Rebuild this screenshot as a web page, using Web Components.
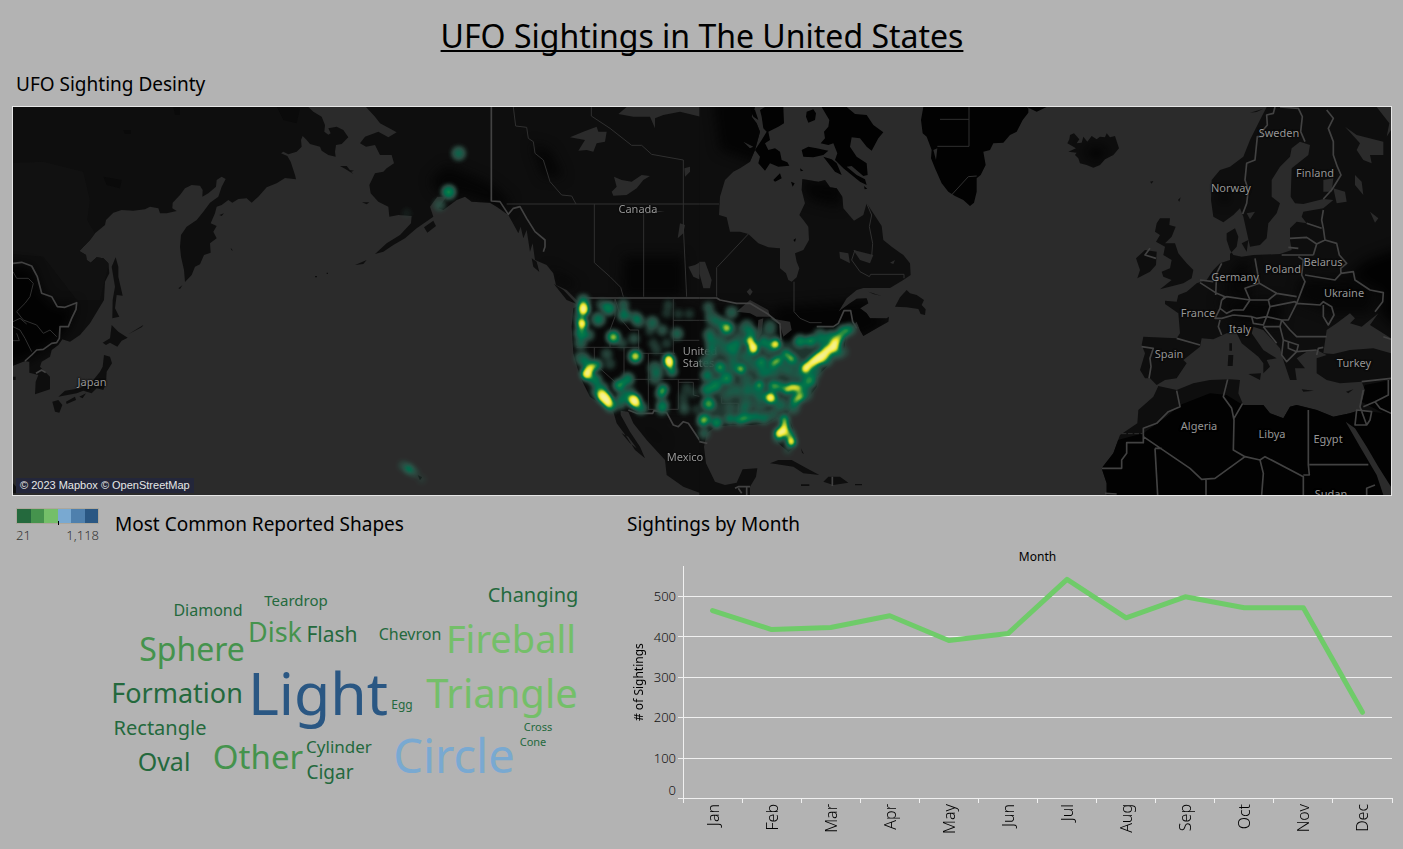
<!DOCTYPE html>
<html lang="en">
<head>
<meta charset="utf-8">
<title>UFO Sightings in The United States</title>
<style>
  html { background: #b3b3b3; }
  body { margin: 0; font-family: "Noto Sans", "Open Sans", sans-serif; color: #000; }
</style>
</head>
<body>
<ufo-dashboard>
  <span slot="title">UFO Sightings in The United States</span>
  <dash-panel slot="map" heading="UFO Sighting Desinty">
    <density-map>
      <map-label x="79" y="275">Japan</map-label>
      <map-label x="625" y="102">Canada</map-label>
      <map-label x="687" y="250">United<br>States</map-label>
      <map-label x="672" y="350">Mexico</map-label>
      <map-label x="1266" y="26">Sweden</map-label>
      <map-label x="1302" y="66">Finland</map-label>
      <map-label x="1218" y="81">Norway</map-label>
      <map-label x="1310" y="155">Belarus</map-label>
      <map-label x="1270" y="162">Poland</map-label>
      <map-label x="1222" y="170">Germany</map-label>
      <map-label x="1331" y="186">Ukraine</map-label>
      <map-label x="1185" y="206">France</map-label>
      <map-label x="1227" y="222">Italy</map-label>
      <map-label x="1156" y="247">Spain</map-label>
      <map-label x="1341" y="256">Turkey</map-label>
      <map-label x="1186" y="319">Algeria</map-label>
      <map-label x="1259" y="327">Libya</map-label>
      <map-label x="1315" y="332">Egypt</map-label>
      <map-label x="1318" y="387">Sudan</map-label>
    </density-map>
  </dash-panel>
  <color-legend slot="legend" low="21" high="1,118"></color-legend>
  <dash-panel slot="shapes" heading="Most Common Reported Shapes">
    <word-cloud>
      <cloud-word x="100" y="71" size="16" tone="deep">Diamond</cloud-word>
      <cloud-word x="188" y="61" size="15" tone="deep">Teardrop</cloud-word>
      <cloud-word x="425" y="58" size="20" tone="deep">Changing</cloud-word>
      <cloud-word x="84" y="116" size="32" tone="mid">Sphere</cloud-word>
      <cloud-word x="167" y="97" size="27" tone="mid">Disk</cloud-word>
      <cloud-word x="224" y="98" size="21" tone="deep">Flash</cloud-word>
      <cloud-word x="302" y="95" size="16" tone="deep">Chevron</cloud-word>
      <cloud-word x="403" y="108" size="38" tone="light">Fireball</cloud-word>
      <cloud-word x="69" y="158" size="27" tone="deep">Formation</cloud-word>
      <cloud-word x="210" y="171" size="59" tone="navy">Light</cloud-word>
      <cloud-word x="294" y="165" size="12" tone="deep">Egg</cloud-word>
      <cloud-word x="394" y="164" size="40" tone="light">Triangle</cloud-word>
      <cloud-word x="52" y="191" size="20" tone="deep">Rectangle</cloud-word>
      <cloud-word x="56" y="226" size="25" tone="deep">Oval</cloud-word>
      <cloud-word x="150" y="224" size="33" tone="mid">Other</cloud-word>
      <cloud-word x="231" y="208" size="17" tone="deep">Cylinder</cloud-word>
      <cloud-word x="222" y="235" size="19" tone="deep">Cigar</cloud-word>
      <cloud-word x="346" y="229" size="47" tone="sky">Circle</cloud-word>
      <cloud-word x="430" y="186" size="11" tone="deep">Cross</cloud-word>
      <cloud-word x="425" y="201" size="11" tone="deep">Cone</cloud-word>
    </word-cloud>
  </dash-panel>
  <dash-panel slot="months" heading="Sightings by Month">
    <month-chart></month-chart>
  </dash-panel>
</ufo-dashboard>

<script>
class Base extends HTMLElement {
  render(html) {
    if (!this.shadowRoot) this.attachShadow({ mode: 'open' });
    this.shadowRoot.innerHTML = html;
  }
}

customElements.define('ufo-dashboard', class extends Base {
  connectedCallback() {
    this.render(`
      <style>
        :host { display: block; padding: 12px 11px 0 12px; }
        h1 { margin: 0; text-align: center; font-size: 32px; line-height: 48px; font-weight: 400;
             text-decoration: underline; text-decoration-thickness: 2px; text-underline-offset: 2px; text-decoration-skip-ink: none; }
        .map { padding-top: 11px; }
        .row { display: grid; grid-template-columns: 96px 512fr 772fr; padding-top: 12px; }
      </style>
      <header><h1><slot name="title"></slot></h1></header>
      <main>
        <div class="map"><slot name="map"></slot></div>
        <div class="row"><slot name="legend"></slot><slot name="shapes"></slot><slot name="months"></slot></div>
      </main>`);
  }
});

customElements.define('dash-panel', class extends Base {
  connectedCallback() {
    this.render(`
      <style>
        :host { display: block; min-width: 0; }
        h2 { margin: 0; padding: 0 4px; font-size: 19px; line-height: 26px; font-weight: 400; }
        :host([slot="map"]) h2 { padding-bottom: 9px; }
        :host([slot="shapes"]) h2, :host([slot="months"]) h2 { padding: 3px 7px 8px; }
      </style>
      <section><h2>${this.getAttribute('heading')}</h2><slot></slot></section>`);
  }
});

customElements.define('map-label', class extends Base {
  connectedCallback() {
    this.style.left = this.getAttribute('x') / 13.78 + '%';
    this.style.top = this.getAttribute('y') / 3.88 + '%';
    this.render(`
      <style>
        :host { position: absolute; transform: translate(-50%, -50%); font-size: 11px; line-height: 12px;
                color: #969696; text-shadow: 0 0 2px #000, 0 0 2px #000; white-space: nowrap; }
      </style><slot></slot>`);
  }
});

/* Sighting density points: x, y, strength, radius */
const HEAT = [
  [70,62,.42,17],[70,84,.95,17],[71,92,.9,15],[66,130,.95,15],[66,135,.6,14],[62,160,.5,17],[85,165,.3,16],[62,190,.34,16],[60,110,.3,17],
  [115,118,.42,19],[147,85,.48,19],[125,75,.22,15],[190,74,.3,15],[192,105,.42,18],[226,112,.3,17],[236,124,.3,17],[277,128,.34,18],[307,151,.26,15],[351,161,.34,17],[270,153,.16,13],
  [160,171,.62,19],[160,172,.4,9],[222,176,.24,15],[186,190,.2,14],[226,229,.66,19],[226,229,.5,10],[140,222,.2,16],[150,252,.16,15],[325,75,.15,14],[320,100,.12,14],[355,102,.13,14],[388,102,.13,14],[280,190,.15,14],[290,210,.15,14],[320,190,.15,14],
  [65,235,.3,20],[82,250,.3,18],[110,255,.5,15],[95,262,.5,14],[80,282,.95,17],[88,268,.8,13],[105,300,.45,18],[125,325,.4,17],[128,348,.97,18],[137,356,.98,18],[144,366,.95,16],[152,380,.5,15],[110,335,.35,15],
  [178,316,.58,17],[203,298,.45,18],[190,350,.34,18],[210,338,.3,16],[222,361,.98,18],[226,367,.95,16],[243,385,.4,17],[180,370,.3,17],
  [326,238,.95,15],[328,248,.96,16],[336,274,.5,14],[309,328,.55,15],[303,342,.45,15],[308,375,.38,17],[306,388,.3,16],[285,265,.3,20],[285,295,.26,18],[300,280,.15,15],
  [380,325,.14,15],[370,350,.13,14],[400,340,.12,14],[373,388,.2,15],[410,388,.12,14],[370,370,.12,14],
  [445,82,.26,15],[455,110,.26,18],[447,165,.3,17],[515,97,.3,17],[475,125,.26,17],[500,144,.62,18],[500,144,.35,9],[455,190,.24,18],[455,215,.26,17],[437,245,.26,18],[440,286,.38,17],
  [560,140,.3,19],[630,140,.25,18],[575,160,.3,16],[570,182,.87,13],[580,202,.97,15],[581,209,.85,13],[522,200,.36,19],[495,205,.22,19],[540,180,.18,18],[480,180,.18,16],
  [612,186,.42,15],[646,193,.88,15],[630,205,.22,17],[720,183,.48,17],[752,183,.52,15],[780,165,.3,18],[850,155,.5,18],[870,148,.4,16],[815,170,.38,18],
  [480,262,.54,16],[500,295,.48,18],[543,267,.7,14],[470,310,.26,18],[440,330,.42,18],[465,320,.3,17],[520,260,.24,18],[520,230,.22,19],[560,230,.24,18],[580,255,.2,18],
  [605,245,.48,15],[640,250,.6,13],[655,240,.62,13],[678,222,.56,13],[694,236,.68,13],[710,250,.18,17],[610,275,.32,19],[640,275,.24,18],[675,265,.22,18],[700,280,.16,18],[730,285,.22,18],[765,275,.26,18],
  [736,267,.97,13],[740,260,.93,13],[755,248,.95,13],[768,240,.98,15],[780,232,.98,17],[792,223,.96,15],[804,210,.95,13],[820,202,.97,15],[825,190,.97,14],[836,176,.6,14],[790,190,.28,18],[800,240,.3,18],[830,220,.28,18],[848,215,.18,17],
  [598,315,.64,13],[560,300,.18,18],[640,318,.55,15],[660,320,.4,15],[632,353,.96,16],[600,345,.28,18],[682,328,.74,13],[697,321,.74,13],[712,324,.74,13],[720,350,.66,14],[706,360,.55,14],[750,302,.5,17],[730,320,.3,17],[740,345,.22,17],[700,385,.28,18],[660,375,.26,18],
  [570,330,.25,18],[545,335,.15,19],[520,330,.18,18],[560,370,.2,18],[550,390,.2,16],[600,375,.15,17],[500,345,.14,17],
  [446,371,.56,20],[446,372,.25,9],[433,418,.56,18],[428,425,.35,15],[470,429,.55,16],[433,460,.28,16],[510,418,.38,15],[540,420,.5,15],[560,415,.5,14],[585,412,.38,15],[612,416,.38,16],[640,408,.24,16],[510,385,.12,15],
  [673,417,.64,14],[674,436,.75,13],[670,452,.94,14],[658,460,.95,15],[685,458,.4,15],[694,486,.92,14],[690,470,.45,15],[655,475,.3,15],[683,510,.15,13],
  [-304,-380,.36,19],[-334,-264,.54,19],[-362,-225,.22,17],[-460,-200,.05,14],[-453,567,.44,14],[-470,557,.18,14],[-437,578,.2,13],[-415,598,.08,13]
];

customElements.define('density-map', class extends Base {
  connectedCallback() {
    const dots = HEAT.map(([x, y, s, r]) => `<circle cx="${x}" cy="${y}" r="${r}" fill-opacity="${s}"/>`).join('');
    this.render(`
      <style>
        :host { display: block; position: relative; overflow: hidden; border: 1px solid #e6e6e6; background: #2b2b2b; }
        svg { display: block; width: 100%; height: auto; }
        .heat { position: absolute; inset: 0; height: 100%; }
        .land { fill: #0e0e0e; }
        .dark { fill: #020202; }
        .sea { fill: #2b2b2b; }
        .line { fill: none; stroke: #424242; stroke-width: 5; stroke-linejoin: round; }
        .thin { fill: none; stroke: #303030; stroke-width: 3; }
        .credit { position: absolute; left: 3px; bottom: 2px; padding: 0 4px; background: #23263a;
                  font-family: "Liberation Sans", Arial, sans-serif; font-size: 11px; line-height: 15px; color: #e6e6e6; }
        a { color: inherit; text-decoration: none; }
      </style>
      <svg viewBox="39 21 4134 1164" role="img" aria-label="World map with sighting density">
        <defs>
          <filter id="soft" x="-20%" y="-20%" width="140%" height="140%" color-interpolation-filters="sRGB"><feGaussianBlur stdDeviation="18"/></filter>
          <clipPath id="cAsia"><use href="#asia"/></clipPath>
          <clipPath id="cWest"><use href="#west"/></clipPath>
          <clipPath id="cEast"><use href="#east"/></clipPath>
          <clipPath id="cEurope"><use href="#europe"/></clipPath>
        </defs>
        <g>
          <path id="asia" class="land" d="M39 21H925L940 35 965 50 975 75 973 95 985 104 992 100 985 85 1010 80 1030 90 1045 112 1025 132 1008 135 1005 155 1007 170 985 165 965 152 960 140 930 132 918 118 908 108 903 120 905 140 890 155 865 163 850 155 843 160 862 168 872 185 885 225 888 238 855 234 830 250 800 262 775 290 755 308 740 295 715 297 697 308 685 300 665 315 650 320 645 340 632 370 650 378 640 395 650 415 630 430 632 458 612 465 600 493 585 500 575 525 555 546 552 510 543 470 540 440 543 405 560 380 590 360 610 335 630 308 655 290 665 260 677 237 665 230 650 240 648 260 625 280 607 290 608 270 600 257 575 255 555 265 540 285 518 308 517 325 530 333 500 340 480 340 475 325 450 320 435 328 400 332 365 330 340 338 318 360 315 375 285 400 270 420 238 453 258 465 260 480 272 488 290 472 310 475 325 490 328 520 315 545 312 600 270 670 240 705 210 725 187 718 175 735 155 750 150 770 125 785 120 800 135 815 150 830 150 868 105 883 107 845 115 825 88 818 88 785 75 783 39 797Z
            M347 472L355 500 355 530 368 587 350 585 345 625 358 650 337 655 338 600 345 560 335 500Z
            M335 675L355 695 383 713 365 722 352 740 330 728 318 735 308 728 330 715Z
            M312 765L330 770 336 790 320 815 318 850 310 870 290 865 275 880 250 872 230 880 175 890 195 872 240 865 280 840 300 815 308 800Z
            M157 905L175 900 187 915 178 938 165 935ZM198 905L225 890 228 900 200 912ZM238 890L258 880 248 895Z
            M535 565L547 556 540 567ZM658 345L672 340 665 348ZM692 443L699 452 694 450ZM385 703L430 675 426 681ZM1020 198H1040L1056 218 1060 222 1035 206Z
            M39 830H47V840H39ZM39 1150L48 1160 48 1180H39ZM945 528H951V532H945ZM980 518H984V522H980Z"/>
          <g clip-path="url(#cAsia)">
            <path fill="#111" d="M0 190L130 185 250 215 270 300 262 360 330 480 300 600 230 600 130 470 0 460Z"/>
            <path fill="#050505" d="M310 230L365 240 360 265 320 255ZM830 20L900 25 890 70 850 60ZM370 90H392V102H375ZM520 20H540V44H525Z" opacity=".5"/>
            <path class="dark" d="M0 490L95 500 125 580 170 622 228 610 205 680 165 730 75 783 0 797Z" filter="url(#soft)"/>
          </g>
          <path class="line" d="M39 490L65 487 95 498 112 530 125 580 155 590 172 620 195 622 230 608 228 628 215 655 205 680 180 680 178 715 170 728 155 730 130 748 110 750 95 765 75 783M108 820L125 810 137 818"/>
          <path class="thin" d="M39 515L50 535 85 535 100 550 90 590 75 610 50 635 70 660 110 675 130 700 150 690 170 710M39 665L60 655 80 672M39 680L60 690 75 715 95 755M39 722H58L50 700"/>
        </g>
        <g transform="translate(1050 0)">
          <path id="west" class="land" d="M48 21L75 50 90 70 118 85 140 97 115 112 85 95 45 110 30 130 48 140 75 135 90 165 125 165 132 190 110 205 100 215 75 220 58 255 62 280 85 305 115 320 118 350 145 345 185 348 183 370 150 405 110 430 75 462 100 455 130 435 165 415 200 385 250 350 240 320 262 290 290 290 265 325 280 330 320 300 345 290 365 305 420 308 440 320 475 345 490 372 505 400 512 380 520 415 530 390 540 455 548 430 555 480 590 495 610 520 618 555 650 570 680 600 690 615 670 625 665 680 670 760 690 830 720 890 770 925 790 935 800 970 830 1010 855 1050 885 1075 870 1040 840 995 812 945 812 932 835 935 850 970 890 1020 945 1080 950 1125 1000 1160 1052 1180V21Z
            M222 382L250 362 258 378 232 398ZM36 307H58L50 313ZM15 495L50 480 40 492ZM545 475L560 485 568 516 550 500ZM612 552L640 570 680 612 650 600ZM815 1000L835 1010 860 1045 840 1030ZM203 1125L216 1132 210 1141ZM0 210L12 212 2 216Z"/>
          <g clip-path="url(#cWest)">
            <g filter="url(#soft)">
              <path fill="#050505" d="M240 240L290 195 420 250 480 300 470 330 340 285 260 275ZM545 130L600 150 640 230 580 230ZM820 470H1000V590H815ZM590 500L690 560 640 560Z"/>
              <path fill="#050505" d="M690 620H1052V930H850L720 860ZM850 950L950 1030 920 1020Z" opacity=".6"/>
            </g>
          </g>
          <path class="sea" d="M660 112L700 95 740 80 745 95 770 95 765 125 740 130 730 155 710 150 685 152 705 120ZM785 275L800 260 792 230 815 240 845 245 875 225 900 228 880 240 860 265 830 285 790 287ZM805 42L830 21H1052V50L990 35 940 45 915 55 915 85 900 50 850 50ZM1003 205L1020 200 1020 215 1005 230ZM990 370L1005 375 1000 400 983 415ZM1015 500L1035 495 1052 485V540L1030 530ZM868 352L900 332 945 334 885 342Z"/>
          <path class="line" d="M424 21V303L450 305 475 343 490 325 510 320 530 355 555 395 585 420V440L580 455M690 594H1052M835 930L860 940H908L912 932 950 938 970 975 985 980 1000 965 1015 970 1052 1025"/>
          <path class="thin" d="M490 21L497 78 530 82 535 115 550 125 555 160 580 180 600 245 635 285 665 288 678 312M470 312H1052M724 21V48L780 85 845 136H875L905 163 1000 180V380L1010 590M733 312V488L780 530 812 562 820 590M881 335V590M970 596V760M970 661H1052M970 721H1052M680 742H868M795 596V650L780 690V742M795 596L815 660 840 690H866M866 690V760H975M822 742V838M895 760V930M822 838H1052M985 838V928H895M985 847H1030V885L1052 890M733 742V790L822 870"/>
        </g>
        <g transform="translate(2100 0)">
          <path id="east" class="land" d="M-2 21H165L155 50 170 70 180 95 165 150 150 185 120 205 100 215 75 240 60 290 57 345 80 352 90 395 120 395 145 402 175 430 205 442 240 445 240 505 258 520 265 540 275 545 290 532 298 505 290 485 285 460 310 450 327 420 325 380 310 360 298 345 315 310 305 270 307 237 355 245 375 240 390 262 410 265 427 290 430 325 462 362 490 345 500 310 520 340 545 378 550 420 575 440 600 458 610 465 630 490 632 525 610 540 570 564 490 564 470 570 440 595 415 635 450 610 470 596 500 595 505 610 480 625 500 640 510 655 560 655 567 650 565 665 530 685 490 708 480 690 470 665 440 695 432 750 410 760 380 800 350 830 350 860 320 900 275 925 262 940 275 975 290 1020 285 1040 265 1055 235 1030 222 1000 240 975 235 950 200 970 150 975 90 975 45 980 20 1000 12 1040 18 1090 45 1145 75 1155 110 1148 128 1108 172 1105 168 1130 150 1160 150 1185H-2Z
            M632 540L620 570 600 592 585 620 620 622 655 627 662 642 675 645 677 628 665 615 672 600 650 585 630 580 620 570ZM210 1090L235 1080 275 1080 320 1105 358 1125 310 1120 280 1100ZM385 1130L420 1130 445 1148 400 1155 370 1145ZM303 1153H328V1158H303ZM465 1152H486V1156H465ZM303 1045L312 1063 306 1058ZM505 575L545 588 520 582Z"/>
          <g clip-path="url(#cEast)">
            <g filter="url(#soft)">
              <path fill="#040404" d="M40 0H200V200L60 150ZM220 620L500 600 560 680 400 740 220 740ZM300 240L430 250 420 320 330 300Z"/>
              <path fill="#060606" d="M0 620H200L220 760 300 700 420 700 300 900 0 900Z"/>
            </g>
          </g>
          <path class="dark" d="M365 21L376 40 388 60 385 80 372 95 375 115 362 130 385 135 400 130 412 160 405 180 430 205 455 225 480 245 500 255 495 238 470 225 440 200 455 198 490 228 503 225 500 190 470 170 450 140 455 112 480 115 500 140 515 152 535 115 550 97 520 75 500 45 465 42 440 21ZM195 21L180 30 185 50 190 85 200 95 185 120 165 150 180 170 175 190 195 212 210 190 235 200 268 197 262 187 245 180 240 155 225 145 205 150 195 130 210 120 205 95 235 80 252 70 250 21ZM320 35L340 28 348 40 345 60 325 68 318 50ZM305 150L325 140 350 145 385 152 370 165 340 172 310 170ZM370 170L395 178 410 190 425 225 405 215 385 190ZM220 240L240 220 245 235 225 245ZM273 245L284 250 278 260ZM300 205L310 212 302 214ZM492 258L502 266 494 268ZM280 420L288 415 285 426ZM150 21L165 30 175 60 160 50Z
            M670 21L663 60 668 100 680 110 695 150 693 175 705 205 725 250 745 275 765 288 790 300 810 318 822 308 830 275 830 235 842 225 857 195 850 155 870 150 880 130 910 128 930 105 950 95 968 60 985 38 985 21ZM980 21H1040L1010 35Z"/>
          <path class="sea" d="M110 635L150 600 205 630 210 650 170 650 150 640ZM175 660L190 655 185 700 170 720ZM210 655L270 665 275 690 250 710 240 675ZM140 575L150 565 158 575 150 587ZM-2 485L15 485 35 540 30 565 10 565-2 520ZM418 455L445 460 450 490 420 475ZM460 450L520 465 510 490 480 480ZM570 488L585 480 580 492ZM130 125L160 140 150 145ZM700 150L712 145 708 180Z"/>
          <path class="line" d="M-2 594H50L60 600 110 610 150 610 205 643 240 672 243 720M350 680H400L415 670 432 632H452L458 665 470 685M-2 1025L22 1030M105 1165L115 1160H150M140 1160V1185M115 1165L125 1180M397 1130V1158"/>
          <path class="thin" d="M-2 312H57M145 402L50 503V590M282 545V635L300 655 330 668H365M500 310L515 345 508 380 518 430 515 470M465 450L455 480 480 515 508 530 512 523H612V535M-2 661H60M720 58H807M807 21V139H712M750 290L805 230 830 228M65 890V910H115V935"/>
        </g>
        <g transform="translate(3150 0)">
          <path id="europe" class="land" d="M650 21L625 70 600 120 580 170 540 200 510 210 485 240 483 300 490 350 520 367 550 345 570 325 580 350 600 440 630 435 650 415 655 370 680 340 690 310 665 290 665 240 690 200 720 170 725 145 750 125 780 135 775 165 725 205 722 290 735 310 760 312 820 297 850 300 820 325 760 335 755 350 770 370 740 365 720 385 720 420 725 450 690 462 610 465 575 470 550 465 540 450 530 420 530 400 555 385 565 410 560 440 540 462 540 480 510 490 490 510 470 540 440 550 410 575 385 585 380 605 345 602 345 612 385 640 390 700 380 715 280 710 275 735 285 760 270 810 285 835 300 835 320 855 345 840 380 835 410 790 400 780 450 740 455 715 490 718 530 700 560 700 575 730 625 770 640 790 640 820 660 800 650 780 680 775 640 750 605 700 610 680 640 690 690 745 700 780 720 840 740 840 735 805 765 805 740 775 770 755 800 750 830 765 800 775 800 820 830 840 870 850 935 845 945 870 930 930 900 940 850 950 800 930 740 915 720 920 700 955 660 940 640 915 580 915 565 880 570 840 540 838 480 840 430 850 380 870 325 858 310 890 265 930 262 970 210 1005 190 1060 155 1105 170 1150 170 1185H1023V21Z
            M52 130L58 118 60 105 72 100 88 118 80 130 95 128 100 110 112 125 125 108 140 118 150 110 165 112 170 100 180 112 195 108 207 145 190 165 165 178 150 195 130 203 110 195 90 190 85 175 75 165 80 158 55 155 78 145Z
            M330 355L360 355 358 375 377 380 365 410 345 430 375 430 385 460 410 490 430 510 425 535 400 550 330 568 365 540 340 530 335 515 360 505 365 480 340 465 345 440 318 425 330 405 315 395 320 370ZM285 450L320 455 318 495 300 515 262 535 270 510 258 475Z
            M535 765L550 765 548 798 533 798ZM538 730H546V752H538ZM595 822L633 820 630 840ZM755 868L792 872 760 875ZM888 875L910 868 895 880ZM575 430L595 420 590 455ZM600 38L640 26 620 36ZM300 245L310 243 305 251ZM384 300L392 292 388 305Z"/>
          <g clip-path="url(#cEurope)">
            <g filter="url(#soft)">
              <path class="dark" d="M95 150L150 140 175 155 140 185ZM500 290L540 280 530 310ZM1060 440V700L990 640 1000 580 900 520 950 480Z"/>
              <path fill="#060606" d="M750 540L900 530 980 580 960 640 850 640 740 600ZM500 600L700 600 690 680 560 670ZM560 490L600 480 600 600 520 580Z"/>
            </g>
            <path class="dark" d="M130 1220V1040L280 1000 350 950 390 915 480 880 530 885 570 910 700 900 1000 940 925 900 945 855 1023 840 1060 840V1220Z"/>
          </g>
          <path class="sea" d="M820 760L830 690 860 670 900 640 915 655 900 670 935 680 985 640 960 675 1023 715V760L970 745 900 750 850 762ZM887 965L930 1040 980 1125 1000 1185H1023V1160L985 1100 950 1040 915 985ZM885 80L920 105 1000 125 1000 165 960 165 965 190 940 180 920 150 930 130ZM980 21H1023V90L1010 110 1018 70ZM850 265L885 275 890 305 860 310ZM915 225L935 245 940 285 915 255ZM820 240L850 235 845 275 820 275ZM960 335L985 355 975 368ZM590 340L615 335 600 358Z"/>
          <path class="line" d="M675 21L670 40 650 45 652 75 635 95 638 110 622 110 615 180 590 190 585 240 595 270 590 310 578 342M690 21L745 25 757 50 752 95 765 125M830 30L850 55 835 85 850 125 850 165 862 200 873 225 845 270 820 297
            M820 330L815 360 820 385 825 420 800 432 770 412 720 415M770 370L815 385M825 420L860 430 868 465 890 490 872 505 873 520 855 540 765 525M695 465H745M745 445L715 442M745 470L760 480 755 525 765 545 740 610M790 465L800 432M790 465L745 465M873 520L910 515 915 540 960 570 1000 578 998 605 975 635
            M615 475L628 550 585 565 600 600 530 590 515 600M628 550L680 580 740 590M680 580L655 600 600 600M655 600L660 620 735 605 740 610 810 615 820 605 845 620 852 645 835 675 820 650 820 615M740 610L715 660 695 660 650 650 660 620M650 650L620 655 605 650 550 645M600 600L580 630 550 630M515 600L525 590 500 580 450 548M515 490L500 520 497 585M450 540L490 545M515 600L510 625 530 640 550 630M510 625L495 655 515 655 550 645M510 660L505 680 515 705M605 650L610 670 640 675 650 650M640 680L690 680 695 660 720 690 740 710 830 710M640 680L680 730M690 680L700 720 745 735 740 755 800 750M700 720L695 765 710 785 740 755 715 745 715 725M800 765L805 745 820 742
            M380 715L450 735M275 740L310 745 300 775 303 800 297 835M380 872L390 920 355 935 320 970 280 985V1028H230V1060L215 1080V1105H155M280 1010L420 1105 455 1138 495 1135 585 1070 550 1050 552 960 545 925 520 890 533 838M578 910L552 955M585 1070L630 1080 645 1070 760 1130V1185M630 1080L640 1120 635 1185M468 1140V1185M315 1045H335M315 1045L323 1185M775 930V1095L778 1125H760M778 1094H955M935 845L1023 835M1015 840V885L975 905 940 920M975 905L990 925 1023 940M940 870L930 920 950 975 915 975 920 930 965 935 960 960 950 975M300 445L285 465 318 475M975 1155L950 1165V1185M165 1180L200 1182M1000 710L1023 718"/>
          <path class="thin" d="M215 1001H280" stroke-dasharray="14 5"/>
        </g>
      </svg>
      <slot></slot>
      <svg class="heat" viewBox="39 21 4134 1164" aria-hidden="true">
        <defs>
          <filter id="ramp" filterUnits="userSpaceOnUse" x="-520" y="-480" width="1500" height="1200" color-interpolation-filters="sRGB">
            <feGaussianBlur stdDeviation="8" result="d"/>
            <feColorMatrix in="d" values="0 0 0 1 0  0 0 0 1 0  0 0 0 1 0  0 0 0 0 1"/>
            <feComponentTransfer result="c">
              <feFuncR type="table" tableValues=".17 .17 .17 .12 .01 .01 .22 .62 .93 .96 .96"/>
              <feFuncG type="table" tableValues=".3 .3 .31 .36 .42 .47 .58 .76 .9 .94 .95"/>
              <feFuncB type="table" tableValues=".26 .26 .27 .29 .3 .29 .24 .2 .18 .45 .65"/>
            </feComponentTransfer>
            <feComponentTransfer in="d" result="a">
              <feFuncA type="table" tableValues="0 .55 .9 .96 1 1 1 1 1 1 1"/>
            </feComponentTransfer>
            <feComposite in="c" in2="a" operator="in"/>
          </filter>
        </defs>
        <g transform="translate(1680 540)" filter="url(#ramp)">
          <path fill-opacity=".13" d="M440 80L450 120 500 110 540 140 640 150 670 190 760 165 860 150 850 200 780 280 770 320 720 380 620 410 500 425 430 420 480 360 430 330 440 250Z"/>
          ${dots}
        </g>
      </svg>
      <div class="credit"><a href="#mapbox">© 2023 Mapbox</a> <a href="#osm">© OpenStreetMap</a></div>`);
  }
});

customElements.define('color-legend', class extends Base {
  connectedCallback() {
    const tones = ['#24693d', '#45934d', '#74bf69', '#79a9d1', '#4f80ad', '#2a5783'];
    this.render(`
      <style>
        :host { display: block; padding: 0 9px 0 4px; font-size: 13px; line-height: 16px; font-weight: 300; color: #333; }
        .bar { position: relative; display: flex; height: 14px; border: 1px solid #aca79c; }
        .bar i { flex: 1; }
        .bar::after { content: ""; position: absolute; left: 50%; bottom: -2px; width: 1px; height: 4px; background: #000; }
        .ends { display: flex; justify-content: space-between; padding-top: 3px; }
      </style>
      <div class="bar">${tones.map(t => `<i style="background:${t}"></i>`).join('')}</div>
      <div class="ends"><span>${this.getAttribute('low')}</span><span>${this.getAttribute('high')}</span></div>`);
  }
});

customElements.define('word-cloud', class extends Base {
  connectedCallback() {
    this.render(`<style>:host { display: block; position: relative; height: 280px; }</style><slot></slot>`);
  }
});

customElements.define('cloud-word', class extends Base {
  connectedCallback() {
    const tone = { deep: '#24693d', mid: '#45934d', light: '#74bf69', sky: '#79a9d1', navy: '#2a5783' };
    this.style.left = this.getAttribute('x') / 5.12 + '%';
    this.style.top = this.getAttribute('y') / 2.8 + '%';
    this.style.fontSize = this.getAttribute('size') + 'px';
    this.style.color = tone[this.getAttribute('tone')];
    this.render(`
      <style>:host { position: absolute; line-height: 1; white-space: nowrap; transform: translate(-50%, -89%); }</style>
      <slot></slot>`);
  }
});

customElements.define('month-chart', class extends Base {
  connectedCallback() {
    const months = { Jan: 464, Feb: 417, Mar: 422, Apr: 451, May: 390, Jun: 407, Jul: 541, Aug: 446, Sep: 498, Oct: 471, Nov: 471, Dec: 212 };
    const names = Object.keys(months), y = v => 232 - v * .404;
    const pts = names.map((m, i) => `${(i + .5) * 59},${y(months[m])}`).join(' ');
    const grid = [0, 100, 200, 300, 400, 500].map(v => `<path d="M-5 ${Math.round(y(v))}H708"/>`).join('');
    const ticks = names.concat('').map((m, i) => `<path d="M${i * 59} 232V237"/>`).join('');
    this.render(`
      <style>
        :host { display: grid; grid-template-columns: 12px 30px 1fr; column-gap: 4px; padding: 4px 0 0 13px; }
        .top { grid-column: 3; text-align: center; font-size: 12px; line-height: 16px; padding-bottom: 1px; }
        .side { writing-mode: vertical-rl; transform: rotate(180deg); text-align: center; font-size: 12px; line-height: 12px; }
        .vals { display: grid; grid-template-rows: repeat(5, 2fr) 1fr; align-items: center; justify-items: end;
                padding: 10px 3px 0 0; font-size: 13px; line-height: 16px; font-weight: 300; color: #111; }
        .vals span:last-child { align-self: end; }
        svg { display: block; width: 100%; height: 232px; overflow: visible; }
        .grid { stroke: #f0f0f0; stroke-width: 1; shape-rendering: crispEdges; fill: none; }
        .grid path, polyline { vector-effect: non-scaling-stroke; }
        polyline { fill: none; stroke: #6fcb69; stroke-width: 5; stroke-linecap: round; stroke-linejoin: round; }
        .months { grid-column: 3; display: grid; grid-template-columns: repeat(12, 1fr); justify-items: center; padding-top: 6px;
                  font-size: 16px; line-height: 20px; font-weight: 300; color: #000; }
        .months span { writing-mode: vertical-rl; transform: rotate(180deg); justify-self: center; align-self: start; }
      </style>
      <div class="top">Month</div>
      <div class="side"># of Sightings</div>
      <div class="vals"><span>500</span><span>400</span><span>300</span><span>200</span><span>100</span><span>0</span></div>
      <svg viewBox="0 0 708 232" preserveAspectRatio="none" role="img" aria-label="Sightings by month">
        <g class="grid">${grid}${ticks}<path d="M0 0V232"/></g>
        <polyline points="${pts}"/>
      </svg>
      <div class="months">${names.map(m => `<span>${m}</span>`).join('')}</div>`);
  }
});
</script>
</body>
</html>
